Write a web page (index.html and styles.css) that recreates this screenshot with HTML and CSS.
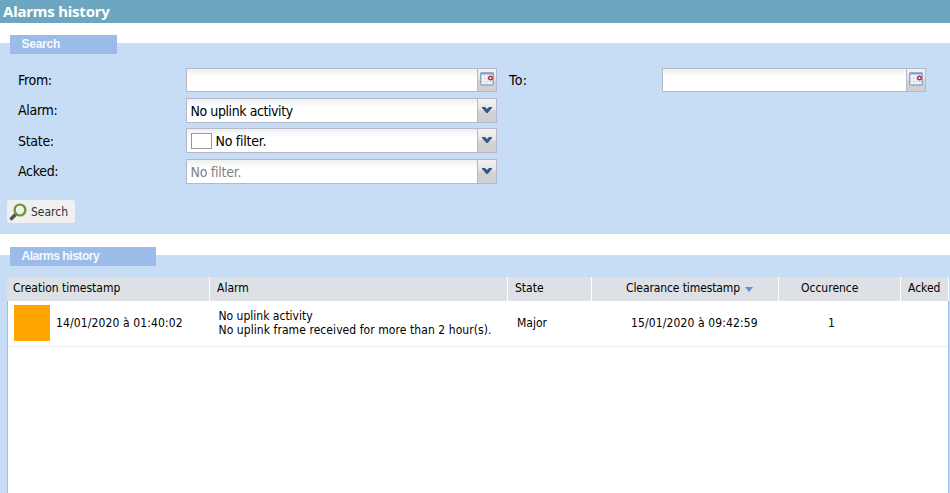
FILE: index.html
```
<!DOCTYPE html>
<html lang="en">
<head>
<meta charset="utf-8">
<title>Alarms history</title>
<link rel="stylesheet" href="styles.css">
</head>
<body>
<svg width="0" height="0" class="defs">
  <symbol id="calendar" viewBox="0 0 14 14">
    <rect x=".75" y="1" width="12.5" height="12" rx="1" fill="#f8f8fa" stroke="#8da9cf" stroke-width="1.5"/>
    <path d="M.5 1.5h13" stroke="#7f9dc6" stroke-width="2"/>
    <path d="M4.5 3v9M7.5 3v9M10.5 8v4M2 6.5h6M2 9.5h10" stroke="#dedee4" fill="none"/>
    <circle cx="10.5" cy="6" r="1.800" fill="#fff" stroke="#a52a3c" stroke-width="1.4"/>
  </symbol>
  <symbol id="chevron" viewBox="0 0 10 6">
    <path d="M0 0h3l2 2 2-2h3v1L5.600 6H4.400L0 1z" fill="#35568f"/>
  </symbol>
</svg>
<h1 class="title"><span>Alarms history</span></h1>
<section class="panel search">
  <h2 class="legend">Search</h2>
  <div class="form">
    <div class="line">
      <label>From:</label>
      <div class="field"><div class="value"></div><div class="trigger"><svg class="cal"><use href="#calendar"/></svg></div></div>
      <label class="to">To:</label>
      <div class="field short"><div class="value"></div><div class="trigger"><svg class="cal"><use href="#calendar"/></svg></div></div>
    </div>
    <div class="line">
      <label>Alarm:</label>
      <div class="field select"><div class="value">No uplink activity</div><div class="trigger"><svg class="chev"><use href="#chevron"/></svg></div></div>
    </div>
    <div class="line">
      <label class="low">State:</label>
      <div class="field select"><div class="value"><i class="swatch"></i><span class="state">No filter.</span></div><div class="trigger"><svg class="chev"><use href="#chevron"/></svg></div></div>
    </div>
    <div class="line">
      <label>Acked:</label>
      <div class="field select"><div class="value muted">No filter.</div><div class="trigger"><svg class="chev"><use href="#chevron"/></svg></div></div>
    </div>
  </div>
  <button class="button">
    <svg class="lens" viewBox="0 0 18 18"><path d="M7 11l-4.500 4.500" stroke="#555" stroke-width="3.600" stroke-linecap="round"/><circle cx="11" cy="7" r="5.400" fill="#edf5e8" stroke="#6c9a38" stroke-width="2.400"/><path d="M8 6a3.500 3.500 0 0 1 3-2.500" fill="none" stroke="#fff" stroke-width="1.500"/></svg>
    <span>Search</span>
  </button>
</section>
<section class="panel history">
  <h2 class="legend wide">Alarms history</h2>
  <div class="grid">
    <div class="cols head">
      <div>Creation timestamp</div><div>Alarm</div><div>State</div><div class="clearance">Clearance timestamp<i class="sort"></i></div><div class="occurence">Occurence</div><div>Acked</div>
    </div>
    <div class="body">
      <div class="cols row">
        <div class="created"><i class="level"></i><span>14/01/2020 à 01:40:02</span></div>
        <div class="message"><span>No uplink activity</span><br><span class="detail">No uplink frame received for more than 2 hour(s).</span></div>
        <div class="major">Major</div>
        <div class="cleared">15/01/2020 à 09:42:59</div>
        <div class="count">1</div>
        <div></div>
      </div>
    </div>
  </div>
</section>
</body>
</html>
```
FILE: styles.css
```
* { box-sizing: border-box; }
body {
  margin: 0;
  height: 493px;
  overflow: hidden;
  background: #fff;
  color: #000;
  font: 12px/14px "DejaVu Sans Condensed", "DejaVu Sans", sans-serif;
  font-stretch: condensed;
}
.defs { position: absolute; }
.title {
  margin: 0;
  height: 23px;
  padding-left: 3px;
  background: #6ca6c1;
  color: #fff;
  font: bold 15px/23px "Noto Sans", sans-serif;
  letter-spacing: -.2px;
}
.panel { background: #c6ddf5; }
.search { margin-top: 20px; height: 191px; }
.history { margin-top: 21px; height: 238px; }
.legend {
  position: relative;
  top: -8px;
  width: 107px;
  height: 19px;
  margin: 0 0 0 10px;
  padding-left: 11.5px;
  background: #9bbce8;
  color: #f6f9fe;
  font: bold 12px/18px "Liberation Sans", sans-serif;
  letter-spacing: -.25px;
}
.wide { width: 146px; letter-spacing: -.45px; }
.form { padding: 6px 0 0 18px; display: grid; grid-template-rows: 30px 30px 31px 25px; }
.line { display: flex; font-size: 14px; line-height: 24px; }
.line label { width: 168px; letter-spacing: -.3px; }
.line .low { padding-top: 1px; }
.line .to { width: 153px; margin-left: 12px; letter-spacing: .4px; }
.field { display: flex; width: 311px; height: 24px; border: 1px solid #b5b8c8; background: #fff; }
.select { height: 25px; }
.short { width: 264px; }
.value {
  flex: 1;
  display: flex;
  align-items: center;
  padding-left: 3.5px;
  font-size: 14px;
  letter-spacing: -.42px;
  background: linear-gradient(#edefef, #fff 8px);
}
.state, .muted { letter-spacing: -.25px; }
.muted { color: #808080; }
.swatch { width: 21px; height: 16px; margin-right: 4px; border: 1px solid #999; background: #fff; }
.trigger {
  width: 19px;
  border-left: 1px solid #b5b8c8;
  background: linear-gradient(#f3f3f3, #e4e4e4 45%, #d2d2d2 55%, #d0d0d0);
  display: flex;
  justify-content: center;
}
.cal { width: 14px; height: 14px; margin-top: 3px; }
.chev { width: 10px; height: 6px; margin-top: 8px; }
.button {
  display: flex;
  align-items: center;
  width: 68px;
  height: 23px;
  margin: 16px 0 0 7px;
  padding: 0 0 0 2px;
  border: 0;
  border-radius: 3px;
  background: #f0f0f0;
  color: #333;
  font: 12px/14px "DejaVu Sans Condensed", sans-serif;
}
.lens { width: 18px; height: 18px; margin-right: 4px; }
.grid { width: 942px; margin: 3px 0 0 7px; }
.cols { display: grid; grid-template-columns: 203px 298px 84px 187px 122px 48px; }
.head { height: 24px; background: #dde1e6; line-height: 22px; }
.head div { padding-left: 7px; border-right: 1px solid #fff; white-space: nowrap; }
.head div:first-child { padding-left: 6px; }
.head .clearance { padding-left: 34px; letter-spacing: -.1px; }
.head .occurence { padding-left: 22px; }
.sort { display: inline-block; margin-left: 5px; border: 4.5px solid transparent; border-top: 5px solid #5c95d5; border-bottom: 0; }
.body { height: 200px; border: solid #99bce8; border-width: 0 1px; background: #fff; }
.row { height: 46px; border-bottom: 1px solid #ededed; grid-template-columns: 201px 298px 84px 187px 122px 1fr; }
.created { display: flex; padding: 4px 0 0 6px; line-height: 36px; letter-spacing: .12px; }
.level { width: 36px; height: 36px; margin-right: 6px; background: orange; }
.message { padding: 8px 0 0 9.5px; white-space: nowrap; }
.detail { letter-spacing: .07px; }
.major { padding: 15px 0 0 10px; }
.cleared { padding: 15px 0 0 40px; letter-spacing: .12px; }
.count { padding: 15px 0 0 50px; }
```
